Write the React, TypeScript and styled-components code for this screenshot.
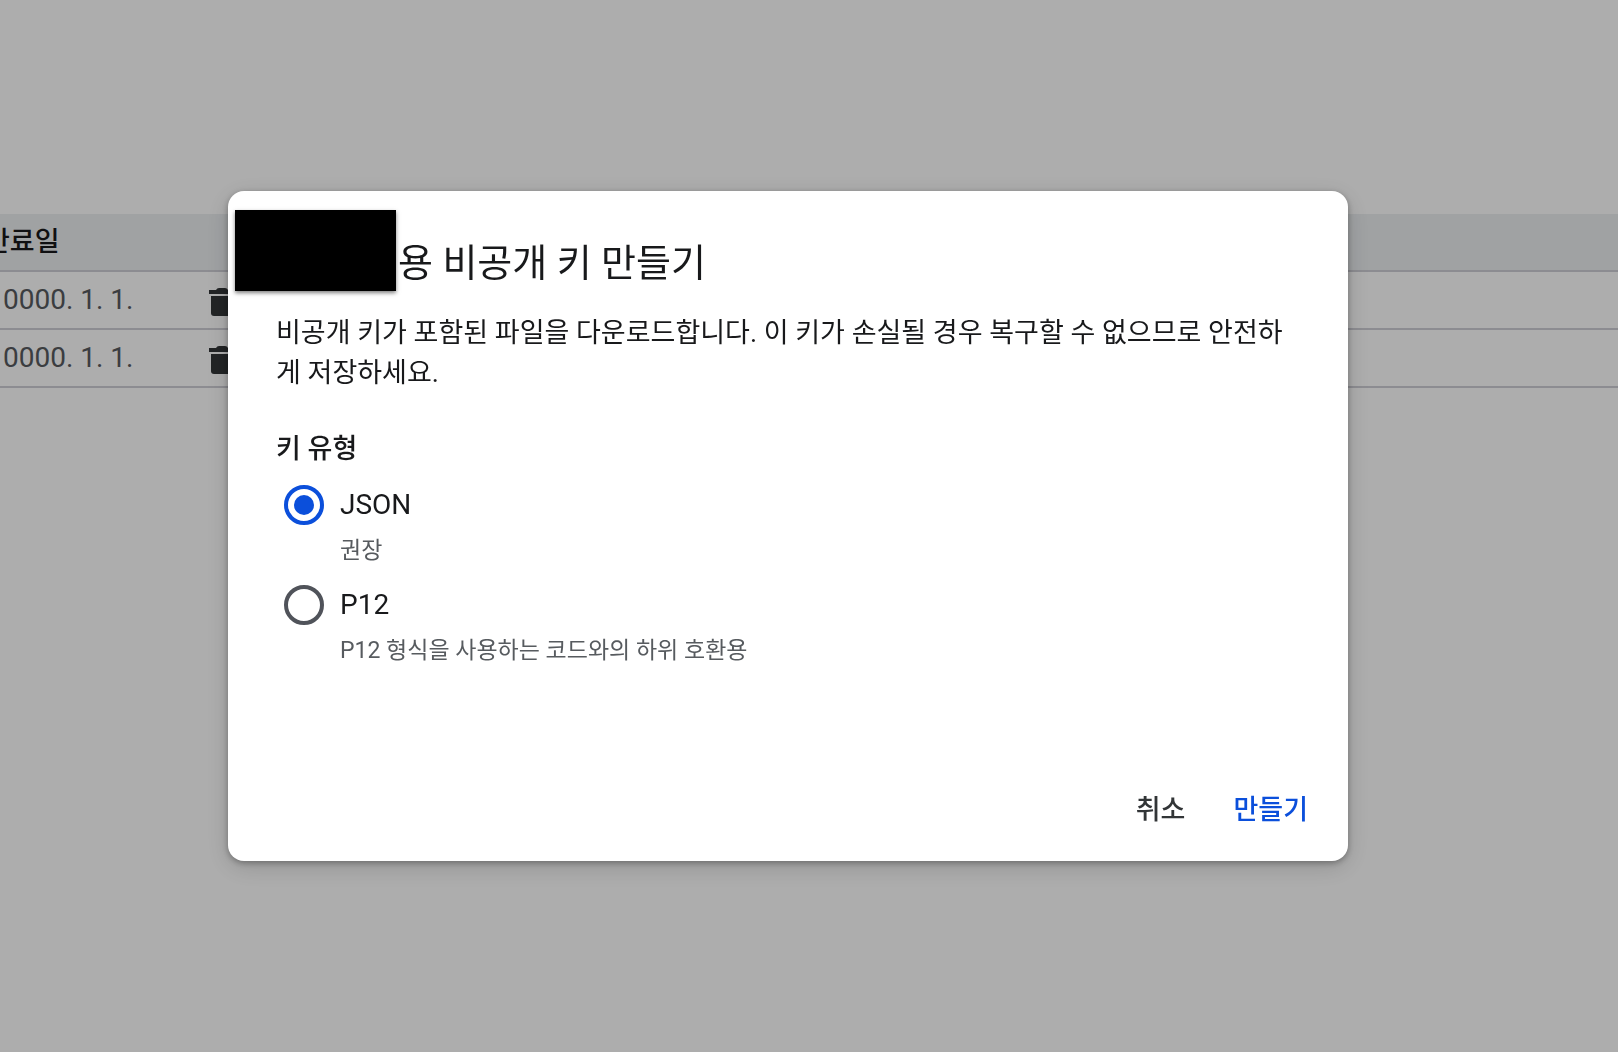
import React, { useState } from "react";
import styled, { createGlobalStyle } from "styled-components";

const GlobalStyle = createGlobalStyle`
  *, *::before, *::after {
    box-sizing: border-box;
  }
  body {
    margin: 0;
    overflow: hidden;
    background: #ffffff;
    color: #18191b;
    font-family: Roboto, "Noto Sans CJK KR", sans-serif;
    font-size: 27px;
    line-height: 40px;
  }
`;

const Page = styled.main`
  min-height: 100vh;
  padding-top: 214px;
  overflow: hidden;
`;

const KeyTable = styled.table`
  width: calc(100% + 31px);
  margin-left: -31px;
  border-collapse: separate;
  border-spacing: 0;
  table-layout: fixed;
`;

const HeadCell = styled.th<{ $width?: number }>`
  width: ${(p) => (p.$width ? `${p.$width}px` : "auto")};
  height: 58px;
  padding: 0 16px;
  border-bottom: 2px solid #cfcfd6;
  background: #eceff1;
  font-weight: 500;
  text-align: left;
  white-space: nowrap;
`;

const Cell = styled.td`
  height: 58px;
  padding: 0 0 0 34px;
  border-bottom: 2px solid #cfcfd6;
  color: #575b5f;
  font-size: 28px;
  white-space: nowrap;
`;

const ActionCell = styled(Cell)`
  padding: 0;
`;

const IconButton = styled.button`
  display: flex;
  margin: 0;
  padding: 4px 0 0;
  border: 0;
  background: none;
  color: #323537;
`;

const Overlay = styled.div`
  position: fixed;
  inset: 0;
  display: flex;
  align-items: center;
  justify-content: center;
  padding-right: 42px;
  background: rgba(0, 0, 0, 0.32);
`;

const Dialog = styled.section`
  width: 100%;
  max-width: 1120px;
  border-radius: 16px;
  background: #ffffff;
  box-shadow: 0 2px 6px rgba(0, 0, 0, 0.3), 0 6px 24px rgba(0, 0, 0, 0.16);
`;

const DialogHeader = styled.header`
  display: flex;
  align-items: flex-end;
  gap: 2px;
  padding: 19px 48px 0 7px;
`;

const Redaction = styled.span`
  width: 161px;
  height: 81px;
  background: #000000;
  box-shadow: 0 2px 4px rgba(0, 0, 0, 0.5);
`;

const Title = styled.h1`
  margin: 0;
  padding-bottom: 4px;
  font-size: 38px;
  font-weight: 400;
  line-height: 48px;
`;

const DialogBody = styled.div`
  padding: 22px 48px 0;
`;

const Description = styled.p`
  margin: 0 0 36px;
  word-break: break-all;
`;

const KeyTypes = styled.fieldset`
  display: flex;
  flex-direction: column;
  gap: 18px;
  min-width: 0;
  margin: 0;
  padding: 0;
  border: 0;
`;

const Legend = styled.legend`
  margin-bottom: 16px;
  padding: 0;
  font-weight: 500;
`;

const Option = styled.div`
  display: grid;
  grid-template-columns: 40px 1fr;
  column-gap: 16px;
  row-gap: 10px;
  padding-left: 8px;
`;

const Radio = styled.input`
  appearance: none;
  display: grid;
  place-content: center;
  width: 40px;
  height: 40px;
  margin: 0;
  border: 4px solid #50535a;
  border-radius: 50%;

  &:checked {
    border-color: #0b4fdb;
  }
  &:checked::before {
    content: "";
    width: 20px;
    height: 20px;
    border-radius: 50%;
    background: #0b4fdb;
  }
`;

const OptionLabel = styled.label`
  font-size: 28px;
`;

const Hint = styled.p`
  grid-column: 2;
  margin: 0;
  color: #575b5f;
  font-size: 23px;
  line-height: 32px;
`;

const DialogFooter = styled.footer`
  display: flex;
  justify-content: flex-end;
  gap: 16px;
  padding: 107px 24px 15px;
`;

const TextButton = styled.button<{ $primary?: boolean }>`
  height: 72px;
  padding: 0 16px;
  border: 0;
  background: none;
  color: ${(p) => (p.$primary ? "#0b4fdb" : "#323537")};
  font: inherit;
  font-weight: 500;
`;

const TrashIcon = () => (
  <svg width="26" height="28" viewBox="0 0 26 28" fill="currentColor" aria-hidden="true">
    <path d="M0 2h7q1-2 3-2h6q2 0 3 2h7v4H0z" />
    <path d="M2 8h22v17q0 3-3 3H5q-3 0-3-3z" />
  </svg>
);

const keyRows = ["0000. 1. 1.", "0000. 1. 1."];

const keyTypes = [
  { id: "json", label: "JSON", hint: "권장" },
  { id: "p12", label: "P12", hint: "P12 형식을 사용하는 코드와의 하위 호환용" },
];

export default function App() {
  const [selected, setSelected] = useState("json");

  return (
    <>
      <GlobalStyle />
      <Page>
        <KeyTable>
          <thead>
            <tr>
              <HeadCell $width={240}>만료일</HeadCell>
              <HeadCell />
            </tr>
          </thead>
          <tbody>
            {keyRows.map((date, index) => (
              <tr key={index}>
                <Cell>{date}</Cell>
                <ActionCell>
                  <IconButton type="button" aria-label="삭제">
                    <TrashIcon />
                  </IconButton>
                </ActionCell>
              </tr>
            ))}
          </tbody>
        </KeyTable>
      </Page>
      <Overlay>
        <Dialog role="dialog" aria-modal="true" aria-labelledby="dialog-title">
          <DialogHeader>
            <Redaction />
            <Title id="dialog-title">용 비공개 키 만들기</Title>
          </DialogHeader>
          <DialogBody>
            <Description>
              비공개 키가 포함된 파일을 다운로드합니다. 이 키가 손실될 경우 복구할 수 없으므로 안전하게 저장하세요.
            </Description>
            <KeyTypes>
              <Legend>키 유형</Legend>
              {keyTypes.map((type) => (
                <Option key={type.id}>
                  <Radio
                    type="radio"
                    name="key-type"
                    id={type.id}
                    checked={selected === type.id}
                    onChange={() => setSelected(type.id)}
                    aria-describedby={`${type.id}-hint`}
                  />
                  <OptionLabel htmlFor={type.id}>{type.label}</OptionLabel>
                  <Hint id={`${type.id}-hint`}>{type.hint}</Hint>
                </Option>
              ))}
            </KeyTypes>
          </DialogBody>
          <DialogFooter>
            <TextButton type="button">취소</TextButton>
            <TextButton type="button" $primary>
              만들기
            </TextButton>
          </DialogFooter>
        </Dialog>
      </Overlay>
    </>
  );
}
